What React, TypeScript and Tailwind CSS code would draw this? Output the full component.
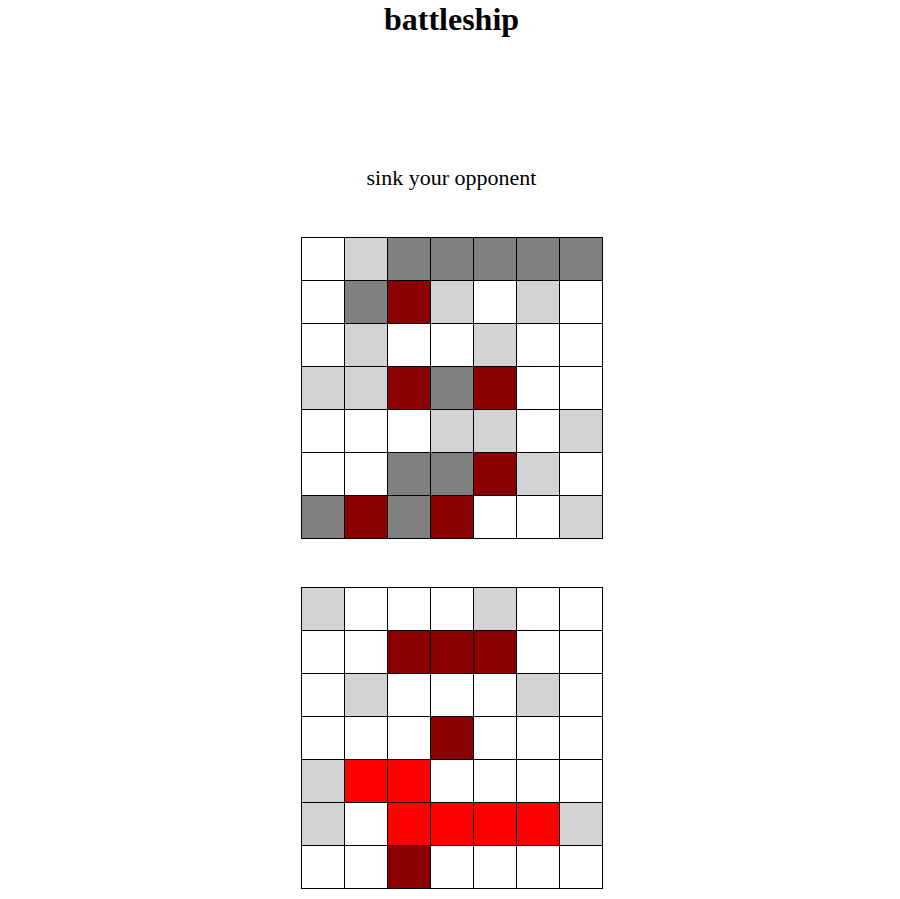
const W = "bg-white";
const L = "bg-[#d3d3d3]";
const G = "bg-[#808080]";
const D = "bg-[#8b0000]";
const R = "bg-[#ff0000]";

const top = [
  [W, L, G, G, G, G, G],
  [W, G, D, L, W, L, W],
  [W, L, W, W, L, W, W],
  [L, L, D, G, D, W, W],
  [W, W, W, L, L, W, L],
  [W, W, G, G, D, L, W],
  [G, D, G, D, W, W, L],
];

const bottom = [
  [L, W, W, W, L, W, W],
  [W, W, D, D, D, W, W],
  [W, L, W, W, W, L, W],
  [W, W, W, D, W, W, W],
  [L, R, R, W, W, W, W],
  [L, W, R, R, R, R, L],
  [W, W, D, W, W, W, W],
];

const Board = ({ cells }: { cells: string[][] }) => (
  <div className="grid grid-cols-7 gap-px bg-black border border-black">
    {cells.flat().map((c, i) => (
      <div key={i} className={`size-[42px] ${c}`} />
    ))}
  </div>
);

export default function App() {
  return (
    <div className="flex flex-col items-center pl-[3px] pt-px bg-white text-black font-['Liberation_Serif','Times_New_Roman',serif]">
      <h1 className="text-[32px] font-bold leading-[37px]">battleship</h1>
      <p className="mt-[127px] text-[22px] leading-[25px]">sink your opponent</p>
      <div className="mt-[47px]">
        <Board cells={top} />
      </div>
      <div className="mt-[48px]">
        <Board cells={bottom} />
      </div>
    </div>
  );
}
